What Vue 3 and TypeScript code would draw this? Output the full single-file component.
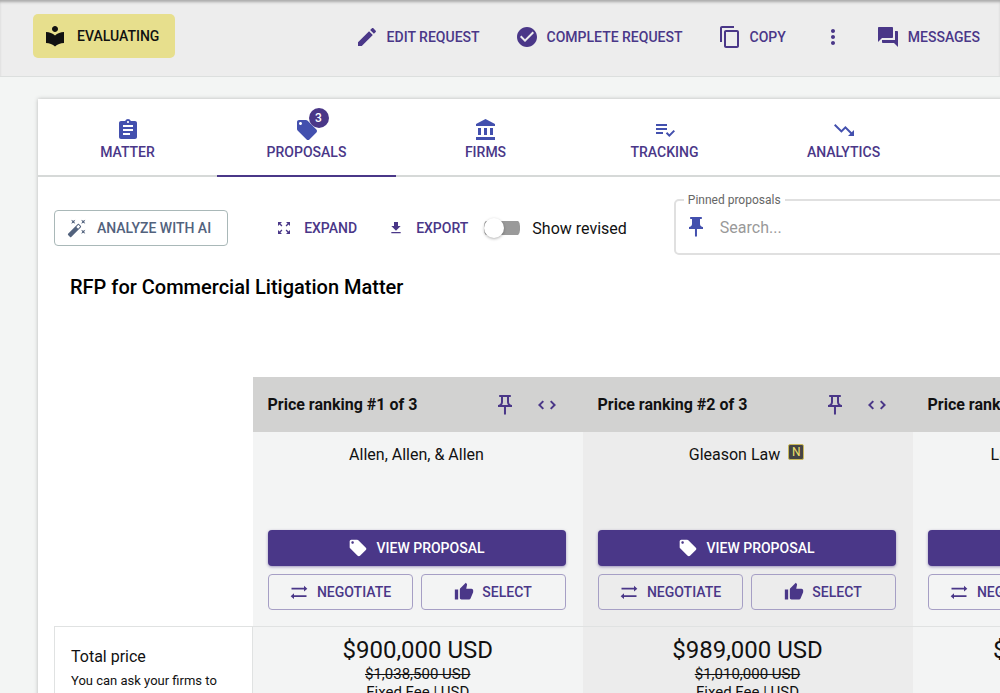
<script setup lang="ts">
import { ref } from 'vue'

interface Action { label: string; icon: string }
interface Tab { label: string; icon: string; count?: number }
interface Proposal { rank: number; firm: string; incumbent?: boolean; price: string; previous: string; fee: string }

const icons: Record<string, string> = {
  library: 'M12 11.55C9.64 9.35 6.48 8 3 8v11c3.48 0 6.64 1.35 9 3.55 2.36-2.19 5.52-3.55 9-3.55V8c-3.48 0-6.64 1.35-9 3.55zM12 8c1.66 0 3-1.34 3-3s-1.34-3-3-3-3 1.34-3 3 1.34 3 3 3z',
  edit: 'M3 17.25V21h3.75L17.81 9.94l-3.75-3.75L3 17.25zM20.71 7.04c.39-.39.39-1.02 0-1.41l-2.34-2.34c-.39-.39-1.02-.39-1.41 0l-1.83 1.83 3.75 3.75 1.83-1.83z',
  check: 'M12 2C6.48 2 2 6.48 2 12s4.48 10 10 10 10-4.48 10-10S17.52 2 12 2zm-2 15l-5-5 1.41-1.41L10 14.17l7.59-7.59L19 8l-9 9z',
  copy: 'M16 1H4c-1.1 0-2 .9-2 2v14h2V3h12V1zm3 4H8c-1.1 0-2 .9-2 2v14c0 1.1.9 2 2 2h11c1.1 0 2-.9 2-2V7c0-1.1-.9-2-2-2zm0 16H8V7h11v14z',
  more: 'M12 8c1.1 0 2-.9 2-2s-.9-2-2-2-2 .9-2 2 .9 2 2 2zm0 2c-1.1 0-2 .9-2 2s.9 2 2 2 2-.9 2-2-.9-2-2-2zm0 6c-1.1 0-2 .9-2 2s.9 2 2 2 2-.9 2-2-.9-2-2-2z',
  messages: 'M21 6h-2v9H6v2c0 .55.45 1 1 1h11l4 4V7c0-.55-.45-1-1-1zm-4 6V3c0-.55-.45-1-1-1H3c-.55 0-1 .45-1 1v14l4-4h10c.55 0 1-.45 1-1z',
  matter: 'M19 3h-4.18C14.4 1.84 13.3 1 12 1c-1.3 0-2.4.84-2.82 2H5c-1.1 0-2 .9-2 2v14c0 1.1.9 2 2 2h14c1.1 0 2-.9 2-2V5c0-1.1-.9-2-2-2zm-7 0c.55 0 1 .45 1 1s-.45 1-1 1-1-.45-1-1 .45-1 1-1zm2 14H7v-2h7v2zm3-4H7v-2h10v2zm0-4H7V7h10v2z',
  tag: 'M21.41 11.58l-9-9C12.05 2.22 11.55 2 11 2H4c-1.1 0-2 .9-2 2v7c0 .55.22 1.05.59 1.42l9 9c.36.36.86.58 1.41.58.55 0 1.05-.22 1.41-.59l7-7c.37-.36.59-.86.59-1.41 0-.55-.23-1.06-.59-1.42zM5.5 7C4.67 7 4 6.33 4 5.5S4.67 4 5.5 4 7 4.67 7 5.5 6.33 7 5.5 7z',
  bank: 'M4 10v7h3v-7H4zm6 0v7h3v-7h-3zM2 22h19v-3H2v3zm14-12v7h3v-7h-3zm-4.5-9L2 6v2h19V6l-9.5-5z',
  tracking: 'M3 10h11v2H3zm0-4h11v2H3zm0 8h7v2H3zm17.59-2.07-4.25 4.24-2.12-2.12-1.41 1.41L16.34 19 22 13.34z',
  trend: 'M16 18l2.29-2.29-4.88-4.88-4 4L2 7.41 3.41 6l6 6 4-4 6.3 6.29L22 12v6z',
  wand: 'M5 2l2.500 1.400L10 2 8.600 4.500 10 7 7.500 5.600 5 7l1.400-2.500zM19.5 15.4L17 14l1.4 2.5L17 19l2.5-1.4L22 19l-1.4-2.5L22 14zM22 2l-2.5 1.4L17 2l1.4 2.5L17 7l2.5-1.4L22 7l-1.4-2.5zm-7.63 5.29c-.39-.39-1.02-.39-1.41 0L1.29 18.96c-.39.39-.39 1.02 0 1.41l2.34 2.34c.39.39 1.02.39 1.41 0L16.7 11.05c.39-.39.39-1.02 0-1.41l-2.33-2.35zm-1.03 5.49l-2.12-2.12 2.44-2.44 2.12 2.12-2.44 2.44z',
  expand: 'M15 3l2.3 2.3-2.89 2.87 1.42 1.42L18.7 6.7 21 9V3zM3 9l2.3-2.3 2.87 2.89 1.42-1.42L6.7 5.3 9 3H3zm6 12l-2.3-2.3 2.89-2.87-1.42-1.42L5.3 17.3 3 15v6zm12-6l-2.3 2.3-2.87-2.89-1.42 1.42 2.89 2.87L15 21h6z',
  download: 'M19 9h-4V3H9v6H5l7 7 7-7zM5 18v2h14v-2H5z',
  pin: 'M16 9V4h1c.55 0 1-.45 1-1s-.45-1-1-1H7c-.55 0-1 .45-1 1s.45 1 1 1h1v5c0 1.66-1.34 3-3 3v2h5.97v7l1 1 1-1v-7H19v-2c-1.66 0-3-1.34-3-3z',
  pinOutline: 'M14 4v5c0 1.12.37 2.16 1 3H9c.65-.86 1-1.9 1-3V4h4m3-2H7c-.55 0-1 .45-1 1s.45 1 1 1h1v5c0 1.66-1.34 3-3 3v2h5.97v7l1 1 1-1v-7H19v-2c-1.66 0-3-1.34-3-3V4h1c.55 0 1-.45 1-1s-.45-1-1-1z',
  widen: 'M5.83 12L9 8.83 7.59 7.42 3 12l4.59 4.59L9 15.17 5.83 12zm12.34 0L15 15.17l1.41 1.42L21 12l-4.59-4.59L15 8.83 18.17 12z',
  thumb: 'M1 21h4V9H1v12zm22-11c0-1.1-.9-2-2-2h-6.31l.95-4.57.03-.32c0-.41-.17-.79-.44-1.06L14.17 1 7.59 7.59C7.22 7.95 7 8.45 7 9v10c0 1.1.9 2 2 2h9c.83 0 1.54-.5 1.84-1.22l3.02-7.05c.09-.23.14-.47.14-.73v-2z',
}

const actions: Action[] = [
  { label: 'EDIT REQUEST', icon: 'edit' },
  { label: 'COMPLETE REQUEST', icon: 'check' },
  { label: 'COPY', icon: 'copy' },
]

const tabs: Tab[] = [
  { label: 'MATTER', icon: 'matter' },
  { label: 'PROPOSALS', icon: 'tag', count: 3 },
  { label: 'FIRMS', icon: 'bank' },
  { label: 'TRACKING', icon: 'tracking' },
  { label: 'ANALYTICS', icon: 'trend' },
]

const proposals: Proposal[] = [
  { rank: 1, firm: 'Allen, Allen, & Allen', price: '$900,000 USD', previous: '$1,038,500 USD', fee: 'Fixed Fee | USD' },
  { rank: 2, firm: 'Gleason Law', incumbent: true, price: '$989,000 USD', previous: '$1,010,000 USD', fee: 'Fixed Fee | USD' },
  { rank: 3, firm: 'Larson, Moore & Whitley', price: '$1,050,000 USD', previous: '$1,120,000 USD', fee: 'Fixed Fee | USD' },
]

const activeTab = ref('PROPOSALS')
const showRevised = ref(false)
const search = ref('')
</script>

<template>
  <div class="page">
    <header class="topbar">
      <button type="button" class="status">
        <svg class="icon" viewBox="0 0 24 24" aria-hidden="true"><path :d="icons.library" /></svg>
        EVALUATING
      </button>
      <nav class="actions" aria-label="Request actions">
        <button v-for="a in actions" :key="a.label" type="button" class="action">
          <svg class="icon" viewBox="0 0 24 24" aria-hidden="true"><path :d="icons[a.icon]" /></svg>
          {{ a.label }}
        </button>
        <button type="button" class="action more" aria-label="More actions">
          <svg class="icon" viewBox="0 0 24 24" aria-hidden="true"><path :d="icons.more" /></svg>
        </button>
        <button type="button" class="action">
          <svg class="icon" viewBox="0 0 24 24" aria-hidden="true"><path :d="icons.messages" /></svg>
          MESSAGES
        </button>
      </nav>
    </header>

    <main class="card">
      <div class="tabs" role="tablist">
        <button
          v-for="t in tabs"
          :key="t.label"
          type="button"
          role="tab"
          class="tab"
          :class="{ active: activeTab === t.label }"
          :aria-selected="activeTab === t.label"
          @click="activeTab = t.label"
        >
          <span class="tab-icon">
            <svg class="icon" viewBox="0 0 24 24" aria-hidden="true"><path :d="icons[t.icon]" /></svg>
            <span v-if="t.count" class="count">{{ t.count }}</span>
          </span>
          {{ t.label }}
        </button>
      </div>

      <div class="toolbar">
        <div class="controls">
          <button type="button" class="analyze">
            <svg class="icon medium" viewBox="0 0 24 24" aria-hidden="true"><path :d="icons.wand" /></svg>
            ANALYZE WITH AI
          </button>
          <div class="tools">
            <button type="button" class="tool">
              <svg class="icon small" viewBox="0 0 24 24" aria-hidden="true"><path :d="icons.expand" /></svg>
              EXPAND
            </button>
            <button type="button" class="tool">
              <svg class="icon small" viewBox="0 0 24 24" aria-hidden="true"><path :d="icons.download" /></svg>
              EXPORT
            </button>
          </div>
          <label class="revised">
            <input v-model="showRevised" type="checkbox" role="switch" class="switch" />
            Show revised
          </label>
        </div>
        <fieldset class="pinned">
          <legend><label for="pinned-search">Pinned proposals</label></legend>
          <svg class="icon" viewBox="0 0 24 24" aria-hidden="true"><path :d="icons.pin" /></svg>
          <input id="pinned-search" v-model="search" type="text" placeholder="Search..." />
        </fieldset>
      </div>

      <h1>RFP for Commercial Litigation Matter</h1>

      <table>
        <colgroup>
          <col class="label-col" />
          <col v-for="p in proposals" :key="p.rank" class="firm-col" />
        </colgroup>
        <thead>
          <tr>
            <td></td>
            <th v-for="p in proposals" :key="p.rank" scope="col">
              <div class="rank">
                <span class="rank-text">Price ranking #{{ p.rank }} of {{ proposals.length }}</span>
                <button type="button" aria-label="Pin proposal">
                  <svg class="icon" viewBox="0 0 24 24" aria-hidden="true"><path :d="icons.pinOutline" /></svg>
                </button>
                <button type="button" aria-label="Widen column">
                  <svg class="icon" viewBox="0 0 24 24" aria-hidden="true"><path :d="icons.widen" /></svg>
                </button>
              </div>
            </th>
          </tr>
        </thead>
        <tbody>
          <tr>
            <td></td>
            <td v-for="p in proposals" :key="p.rank" class="shade">
              <div class="firm">
                <div class="firm-name">
                  {{ p.firm }}
                  <span v-if="p.incumbent" class="note">N</span>
                </div>
                <button type="button" class="view">
                  <svg class="icon medium" viewBox="0 0 24 24" aria-hidden="true"><path :d="icons.tag" /></svg>
                  VIEW PROPOSAL
                </button>
                <div class="pair">
                  <button type="button" class="outlined">
                    <svg class="icon medium" viewBox="0 0 24 24" aria-hidden="true">
                      <path d="M3 8h17M21 17H4" fill="none" stroke="currentColor" stroke-width="2" />
                      <path d="M18 4.500 22 8l-4 3.500zM6 13.500 2 17l4 3.500z" />
                    </svg>
                    NEGOTIATE
                  </button>
                  <button type="button" class="outlined">
                    <svg class="icon medium" viewBox="0 0 24 24" aria-hidden="true"><path :d="icons.thumb" /></svg>
                    SELECT
                  </button>
                </div>
              </div>
            </td>
          </tr>
          <tr class="total">
            <th scope="row">
              <div class="total-label">Total price</div>
              <p class="hint">You can ask your firms to provide a revised price</p>
            </th>
            <td v-for="p in proposals" :key="p.rank" class="shade">
              <div class="price">{{ p.price }}</div>
              <del class="previous">{{ p.previous }}</del>
              <div class="fee">{{ p.fee }}</div>
            </td>
          </tr>
        </tbody>
      </table>
    </main>
  </div>
</template>

<style>
body {
  margin: 0;
  background: #f3f5f4;
}
</style>

<style scoped>
.page {
  height: 100vh;
  overflow: hidden;
  display: flex;
  flex-direction: column;
  font-family: Roboto, "Liberation Sans", sans-serif;
  font-size: 14px;
  color: #111;
  background: #f3f5f4;
}
* {
  box-sizing: border-box;
}
button {
  font: inherit;
  font-weight: 500;
  color: #4a3788;
  background: none;
  border: 0;
  padding: 0;
  display: flex;
  align-items: center;
  justify-content: center;
  white-space: nowrap;
  cursor: pointer;
}
.icon {
  width: 24px;
  height: 24px;
  flex: none;
  fill: currentColor;
}
.icon.medium {
  width: 20px;
  height: 20px;
}
.icon.small {
  width: 16px;
  height: 16px;
}

.topbar {
  flex: none;
  display: flex;
  align-items: center;
  justify-content: space-between;
  padding: 14px 20px 18px 33px;
  background: #ededed;
  border-bottom: 1px solid #dcdfde;
  box-shadow: inset 0 3px 3px -1px #a8a8a8;
}
.status {
  height: 44px;
  gap: 10px;
  padding: 0 16px 0 10px;
  color: #111;
  background: #e7df8d;
  border-radius: 5px;
}
.actions {
  display: flex;
  gap: 35px;
  padding-top: 2px;
}
.action {
  gap: 8px;
}
.more {
  margin-right: -4px;
}

.card {
  flex: 1 0 auto;
  margin: 22px -40px 0 38px;
  background: #fff;
  box-shadow: 0 0 4px rgba(0, 0, 0, 0.25);
}
.tabs {
  display: flex;
  border-bottom: 2px solid #d6d9d8;
}
.tab {
  flex: 0 0 179px;
  height: 78px;
  padding-top: 4px;
  flex-direction: column;
  gap: 2px;
  margin-bottom: -2px;
  border-bottom: 2px solid transparent;
}
.tab.active {
  border-bottom-color: #4a3788;
}
.tab-icon {
  position: relative;
  display: flex;
  color: #4350ae;
}
.count {
  position: absolute;
  top: -10px;
  right: -10px;
  width: 20px;
  height: 20px;
  border-radius: 50%;
  font-size: 12px;
  line-height: 20px;
  text-align: center;
  color: #fff;
  background: #4a3788;
}

.toolbar {
  display: flex;
  align-items: center;
  padding: 16px 0 0 16px;
}
.controls {
  flex: none;
  display: flex;
  align-items: center;
  padding-top: 8px;
}
.analyze {
  height: 36px;
  padding: 0 16px 0 12px;
  gap: 10px;
  color: #52627d;
  border: 1px solid #a9b8b8;
  border-radius: 4px;
}
.tools {
  display: flex;
  gap: 31px;
  margin-left: 48px;
}
.tool {
  gap: 12px;
}
.revised {
  display: flex;
  align-items: center;
  gap: 12px;
  margin-left: 16px;
  font-size: 16px;
  white-space: nowrap;
}
.switch {
  appearance: none;
  width: 36px;
  height: 20px;
  margin: 0;
  display: flex;
  align-items: center;
  background: linear-gradient(#9a9a9a, #9a9a9a) center / 100% 14px no-repeat;
  border-radius: 8px;
}
.switch::before {
  content: "";
  width: 20px;
  height: 20px;
  border-radius: 50%;
  background: #fff;
  box-shadow: 0 1px 3px rgba(0, 0, 0, 0.3);
}
.switch:checked::before {
  margin-left: auto;
}
.pinned {
  flex: 1;
  min-width: 0;
  height: 62px;
  margin: 0 0 0 47px;
  padding: 0 8px 6px;
  display: flex;
  align-items: center;
  gap: 12px;
  border: 2px solid #e0e0e0;
  border-radius: 5px;
  color: #4350ae;
}
.pinned legend {
  padding: 0 4px;
  font-size: 12px;
  line-height: 14px;
  color: #666;
}
.pinned input {
  flex: 1;
  min-width: 0;
  border: 0;
  outline: 0;
  padding: 0;
  font: inherit;
  font-size: 16px;
  color: #111;
  background: none;
}
.pinned input::placeholder {
  color: #999;
  opacity: 1;
}

h1 {
  margin: 20px 0 78px 32px;
  font-size: 20px;
  line-height: 24px;
  font-weight: 500;
  color: #000;
}

table {
  width: 1188px;
  margin-left: 16px;
  table-layout: fixed;
  border-collapse: collapse;
}
.label-col {
  width: 198px;
}
.firm-col {
  width: 330px;
}
td,
th {
  padding: 0;
  vertical-align: top;
}
thead th {
  background: #d2d2d1;
}
.rank {
  display: flex;
  align-items: center;
  height: 55px;
  padding: 0 24px 0 15px;
  gap: 18px;
}
.rank-text {
  flex: 1;
  text-align: left;
  font-size: 16px;
  font-weight: 700;
  color: #111;
}
.shade {
  background: #f3f4f4;
  text-align: center;
}
.shade:nth-child(odd) {
  background: #ececec;
}
.firm {
  padding: 8px 17px 16px 15px;
}
.firm-name {
  display: flex;
  justify-content: center;
  height: 90px;
  gap: 8px;
  font-size: 16px;
  line-height: 30px;
}
.note {
  width: 16px;
  height: 16px;
  margin-top: 4px;
  border: 1px solid #c9b85a;
  border-radius: 2px;
  font-size: 12px;
  line-height: 14px;
  color: #efe06a;
  background: #444;
}
.view {
  width: 100%;
  height: 36px;
  gap: 8px;
  color: #fff;
  background: #4a3788;
  border-radius: 4px;
  box-shadow: 0 1px 3px rgba(74, 55, 136, 0.5);
}
.pair {
  display: flex;
  gap: 8px;
  margin-top: 8px;
}
.outlined {
  flex: 1 1 0;
  height: 36px;
  gap: 8px;
  border: 1px solid #a69fc5;
  border-radius: 4px;
}
.total th,
.total td {
  border: 1px solid #e0e2e2;
}
.total td {
  border-width: 1px 0 0;
}
.total th {
  padding: 20px 16px;
  text-align: left;
  font-weight: 400;
}
.total-label {
  font-size: 16px;
  line-height: 20px;
}
.hint {
  margin: 4px 0 0;
  font-size: 13px;
  line-height: 20px;
}
.total td {
  padding-top: 8px;
}
.price {
  font-size: 24px;
  line-height: 30px;
}
.previous,
.fee {
  display: block;
  font-size: 15px;
  line-height: 18px;
}
</style>
